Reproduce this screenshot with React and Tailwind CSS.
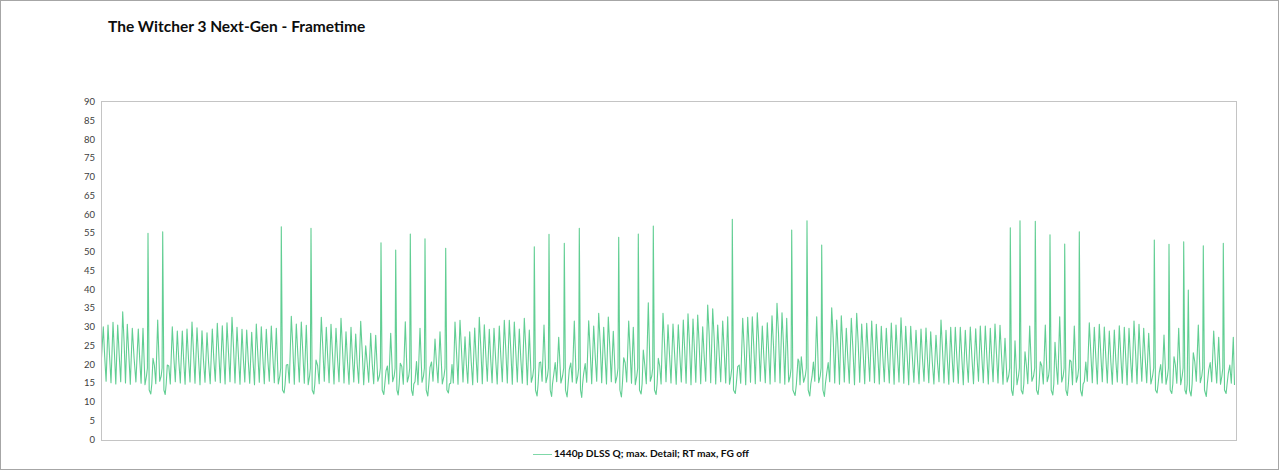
const sets = [
  [60, "130:350 144:345 159:337 173:345 188:305 202:343 217:355 235:357 249:355 264:70 279:445 293:330 308:65 322:465 337:350 352:363 367:363 381:357 396:336 411:353 426:362 441:368 457:357 472:340 487:347 501:338 516:322 531:352 546:358 560:360 575:367 589:342 604:350 619:358 634:348 649:355 664:50 679:465 694:319 709:342 724:336 739:346 753:55 768:450"],
  [320, "4:322 19:352 33:343 48:355 63:325 78:365 93:352 107:372 122:334 137:407 152:370 167:376 183:98 198:483 212:370 227:120 241:460 256:335 271:72 285:515 300:355 315:86 330:472 345:387 360:365 377:115 392:520 405:336 420:331 435:380 449:365 464:354 478:322 493:344 508:358 522:355 538:348 553:331 568:331 583:336 598:357 613:325 628:360 643:110 658:458 672:345 687:73 701:495 716:382 733:100 748:478 763:333 778:55"],
  [580, "11:490 26:332 41:348 56:310 71:352 85:321 100:364 116:82 131:443 146:333 160:352 175:72 190:420 205:278 220:48 235:445 249:310 264:344 279:342 295:344 310:330 324:311 339:327 353:315 368:350 383:285 398:296 413:345 428:333 443:320 457:28 473:470 488:325 503:322 517:320 532:308 547:348 562:338 576:317 591:280 606:308 620:325 635:60 654:447 664:440 681:32 696:500 710:320 725:105 740:490 755:293 770:330"],
  [840, "4:317 19:355 34:325 50:310 65:342 80:340 95:333 109:343 124:349 139:355 154:339 168:345 183:323 197:349 212:349 228:361 243:357 258:354 272:365 288:376 303:330 318:361 332:352 346:352 361:352 376:361 391:351 407:356 421:348 436:348 451:355 465:342 480:346 495:385 511:53 525:392 540:32 555:425 569:348 586:34 601:455 616:345 630:74 645:397 659:320"],
  [1060, "14:102 29:450 43:348 58:65 73:515 88:338 103:352 118:343 133:351 148:363 163:360 178:347 193:352 207:355 222:333 237:343 251:355 266:370 283:90 298:487 312:375 327:103 342:440 356:355 371:95 385:240 400:428 415:345 430:107 446:480 461:363 476:382 490:100 505:490 520:382"],
];

function buildLine() {
  const peaks = [];
  sets.forEach(([ox, s]) => {
    s.split(" ").forEach((p) => {
      const [x, y] = p.split(":").map(Number);
      peaks.push([ox + x / 3, 210 + y / 3]);
    });
  });
  const jitter = (i) => ((i * 37) % 11) - 5;
  const pts = [[101.5, 357.6]];
  peaks.forEach(([x, y], i) => {
    const next = peaks[i + 1];
    const spike = y < 300;
    const nextSpike = next && next[1] < 300;
    pts.push([x, y]);
    if (!next) {
      pts.push([Math.min(x + 2.3, 1234.5), 385]);
      return;
    }
    const span = next[0] - x;
    const base = spike ? 392 : 383 + jitter(i) / 3;
    const shoulder = spike ? 391 : nextSpike ? 368 : Math.min(364 + jitter(i + 3) / 2, y + 30);
    if (spike) {
      pts.push([x + 1.2, 390]);
      pts.push([x + span * 0.55, 395 + jitter(i) / 2]);
      pts.push([x + span * 0.75, 384]);
    } else if (nextSpike) {
      pts.push([x + span * 0.4, base]);
      pts.push([x + span * 0.7, 376]);
      pts.push([x + span * 0.88, shoulder]);
    } else {
      pts.push([x + span * 0.3, shoulder]);
      pts.push([x + span * 0.6, base]);
    }
  });
  return pts.map(([x, y]) => `${(x - 102).toFixed(1)},${(y - 102).toFixed(1)}`).join(" ");
}

const ticks = [90, 85, 80, 75, 70, 65, 60, 55, 50, 45, 40, 35, 30, 25, 20, 15, 10, 5, 0];

export default function App() {
  return (
    <div className="w-[1279px] h-[470px] border border-[#a6a6a6] bg-white flex flex-col font-['Lato','Liberation_Sans',sans-serif]">
      <h1 className="pl-[107px] pt-[15px] h-[100px] text-[15.5px] leading-[20px] font-bold text-[#0d0d0d]">
        The Witcher 3 Next-Gen - Frametime
      </h1>
      <div className="flex h-[340px]">
        <div className="w-[94px] h-[360px] mt-[-6px] flex flex-col items-end text-[9.5px] text-[#404040]">
          {ticks.map((t) => (
            <span key={t} className="h-[18.78px] shrink-0 leading-[13px]">{t}</span>
          ))}
        </div>
        <div className="ml-[6px] w-[1136px] h-[339.5px] border border-[#c4c4c4]">
          <svg viewBox="0 0 1134 338" className="w-[1134px] h-[338px] block">
            <polyline points={buildLine()} fill="none" stroke="#00b050" strokeOpacity="0.62" strokeWidth="1.1" strokeLinejoin="round" />
          </svg>
        </div>
      </div>
      <div className="flex-1 flex items-center justify-center gap-[2px] pl-[3px] pb-[2px] text-[10.2px] font-bold text-[#0d0d0d]">
        <span className="w-[19px] h-[1px] bg-[#7fd8a8]" />
        <span>1440p DLSS Q; max. Detail; RT max, FG off</span>
      </div>
    </div>
  );
}
